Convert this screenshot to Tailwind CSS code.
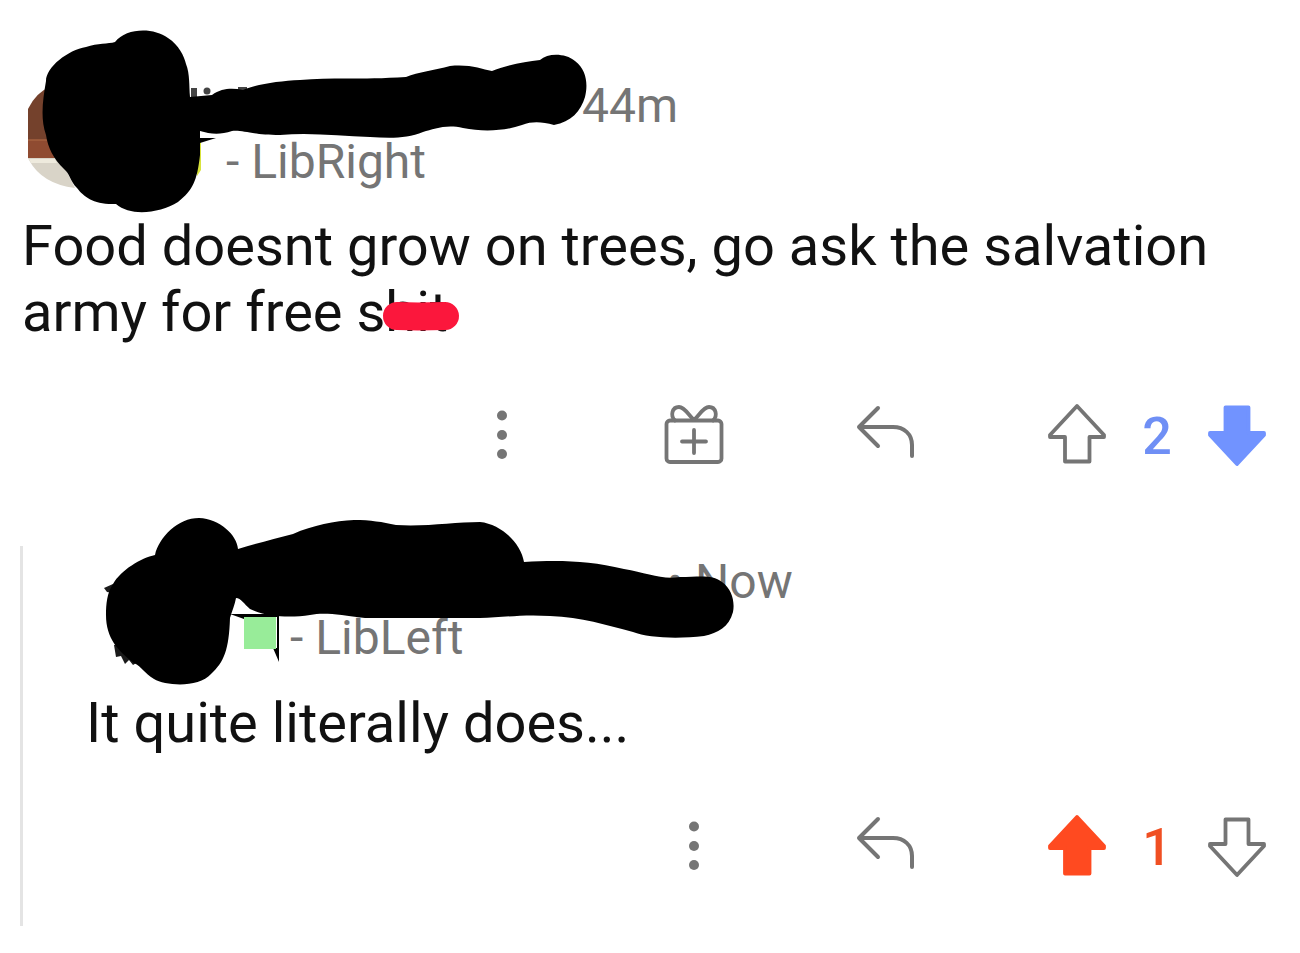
<!DOCTYPE html>
<html lang="en">
<head>
<meta charset="utf-8">
<meta name="viewport" content="width=device-width, initial-scale=1">
<title>Comments</title>
<script src="https://cdn.jsdelivr.net/npm/@tailwindcss/browser@4"></script>
</head>
<body class="bg-white font-['Roboto',sans-serif] text-[#111111]">
<main class="overflow-x-hidden">
  <article class="relative pt-[78px] pb-[79px]">
    <header class="text-[48px] leading-[56px] text-[#757575]">
      <p class="pl-[582px]">44m</p>
      <p class="pl-[226px]">- LibRight</p>
    </header>
    <p class="mt-[23px] pr-6 pl-[22px] text-[56px] leading-[66px]">Food doesnt grow on trees, go ask the salvation army for free <span class="relative">shit<svg class="absolute top-[16px] left-[22px] h-[40px] w-[88px]" viewBox="0 0 88 40" aria-hidden="true"><path d="M19 21 40 21.500 67 21" fill="none" stroke="#fb173c" stroke-width="28" stroke-linecap="round"/></svg></span></p>
    <div class="mt-[58px] flex items-center justify-end pr-[31px] text-[#757575]">
      <button class="flex w-48 justify-center" aria-label="More options"><svg class="size-16" viewBox="0 0 64 64" fill="currentColor"><circle cx="32" cy="12.500" r="5"/><circle cx="32" cy="32" r="5"/><circle cx="32" cy="51" r="5"/></svg></button>
      <button class="flex w-48 justify-center" aria-label="Give award"><svg class="size-16" viewBox="0 0 64 64" fill="none" stroke="currentColor" stroke-width="3.800" stroke-linecap="round" stroke-linejoin="round"><rect x="4.500" y="17.500" width="55" height="41.500" rx="3.500"/><path d="M32 27v23M20 38.500h24M32 17C27 13 23 4 17 4c-7 0-9 9-4 13.500M32 17C37 13 41 4 47 4c7 0 9 9 4 13.500"/></svg></button>
      <button class="flex w-48 justify-center" aria-label="Reply"><svg class="size-16" viewBox="0 0 64 64" fill="none" stroke="currentColor" stroke-width="4" stroke-linecap="round" stroke-linejoin="round"><path d="M24 5 5 24l19 19M5 24h34c11 0 19 7 19 18v11"/></svg></button>
      <button class="ml-[63px]" aria-label="Upvote"><svg class="size-16" viewBox="0 0 64 64" fill="none" stroke="currentColor" stroke-width="3.800" stroke-linejoin="round"><path d="M32 3 59 32v2H44.500v24.500h-24.500V34H5v-2z"/></svg></button>
      <span class="w-24 pt-1 text-center text-[52px] leading-[60px] font-medium text-[#6f8ff5]">2</span>
      <button class="text-[#7193ff]" aria-label="Downvote" aria-pressed="true"><svg class="size-16" viewBox="0 0 64 64" fill="currentColor" stroke="currentColor" stroke-width="3.800" stroke-linejoin="round"><path d="M32 61 59 32v-2H43.500V4.500h-23V30H5v2z"/></svg></button>
    </div>
    <svg class="pointer-events-none absolute top-0 left-0 h-[220px] w-[700px]" viewBox="0 0 700 220" aria-hidden="true">
      <path d="M28 158V109Q36 92 52 86V158Z" fill="#74412c"/>
      <path d="M28 140H60V158H28Z" fill="#8f4b31"/>
      <path d="M28 140H50" stroke="#a5603f" stroke-width="1.500"/>
      <path d="M28 158H60L75 188Q42 184 29 160Z" fill="#d9d4c8"/>
      <path d="M29 159H55L57 163H31Z" fill="#eeeadd"/>
      <path d="M197 140H201V170L197 176Z" fill="#d8e33c"/>
      <path d="M200 138H216L200 143Z"/>
      <path d="M191 88H197V98H191ZM238 87H247V92H238Z" fill="#444"/>
      <circle cx="207" cy="91" r="3.500" fill="#444"/>
      <path d="M46 81C46 67 68 50 86 47C98 43 108 44 115 42C126 28 153 27 168 38C179 45 184 56 186 64C190 74 189 86 190 97L212 95C222 88 232 88 243 90C257 84 279 81 300 80C330 77 360 80 406 77C418 72 435 70 450 66C470 64 481 69 492 71C510 64 525 62 540 60C548 53 565 53 575 61C587 70 588 85 585 97C581 111 571 122 554 125C542 122 533 121 522 125C505 131 483 132 463 128C446 124 434 129 423 132C407 139 388 138 370 137C340 136 310 132 280 135C252 135 244 130 232 131C220 135 210 134 200 131V155C197 181 193 190 178 202C160 213 131 217 116 204C94 205 84 197 77 188C70 181 70 174 64 169C53 158 48 148 46 135C40 118 43 99 46 81Z"/>
    </svg>
  </article>

  <article class="relative ml-5 border-l-3 border-[#e4e4e4] pt-[8px] pb-[48px]">
    <header class="text-[48px] leading-[56px] text-[#757575]">
      <p class="pl-[644px]">• Now</p>
      <p class="pl-[267px]">- LibLeft</p>
    </header>
    <p class="mt-[24px] pl-[63px] text-[56px] leading-[66px]">It quite literally does...</p>
    <div class="mt-[58px] flex items-center justify-end pr-[31px] text-[#757575]">
      <button class="flex w-48 justify-center" aria-label="More options"><svg class="size-16" viewBox="0 0 64 64" fill="currentColor"><circle cx="32" cy="12.500" r="5"/><circle cx="32" cy="32" r="5"/><circle cx="32" cy="51" r="5"/></svg></button>
      <button class="flex w-48 justify-center" aria-label="Reply"><svg class="size-16" viewBox="0 0 64 64" fill="none" stroke="currentColor" stroke-width="4" stroke-linecap="round" stroke-linejoin="round"><path d="M24 5 5 24l19 19M5 24h34c11 0 19 7 19 18v11"/></svg></button>
      <button class="ml-[63px] text-[#ff4a20]" aria-label="Upvote" aria-pressed="true"><svg class="size-16" viewBox="0 0 64 64" fill="currentColor" stroke="currentColor" stroke-width="3.800" stroke-linejoin="round"><path d="M32 3 59 32v2H44.500v25.500h-24.500V34H5v-2z"/></svg></button>
      <span class="w-24 pt-1 text-center text-[52px] leading-[60px] font-medium text-[#f04f22]">1</span>
      <button aria-label="Downvote"><svg class="size-16" viewBox="0 0 64 64" fill="none" stroke="currentColor" stroke-width="3.800" stroke-linejoin="round"><path d="M32 61 59 32v-2H43.500V5.500h-23V30H5v2z"/></svg></button>
    </div>
    <svg class="pointer-events-none absolute -top-[46px] -left-[23px] h-[200px] w-[800px]" viewBox="0 500 800 200" aria-hidden="true">
      <path d="M230 614H279V662L273 648H277V617H244V619Z"/>
      <path d="M244 617H276V649H244Z" fill="#98ec99"/>
      <path d="M104 588 113 584 119 594 107 592ZM114 645 126 642 138 662 133 665 129 660 125 664 121 656 116 657Z" fill="#1a1a1a"/>
      <path d="M155 555C159 537 178 518 199 518C220 519 237 535 238 549C257 543 275 539 293 534C313 525 335 521 354 520C371 520 382 522 396 525C425 527 455 522 480 522C501 524 521 543 524 562C562 560 589 561 624 569C647 573 662 580 680 577C699 577 712 574 722 582C732 589 735 602 733 612C729 627 718 633 704 636C678 639 648 638 633 632C606 625 582 617 550 616C520 614 500 618 480 618H365C340 615 325 612 310 615C290 618 267 617 250 609C244 604 241 598 236 598C235 604 232 611 230 618C229 650 224 662 211 674C199 688 166 686 154 679C144 673 142 667 134 663C118 651 106 638 106 615C106 604 107 593 113 584C121 570 141 558 155 555Z"/>
    </svg>
  </article>
</main>
</body>
</html>
